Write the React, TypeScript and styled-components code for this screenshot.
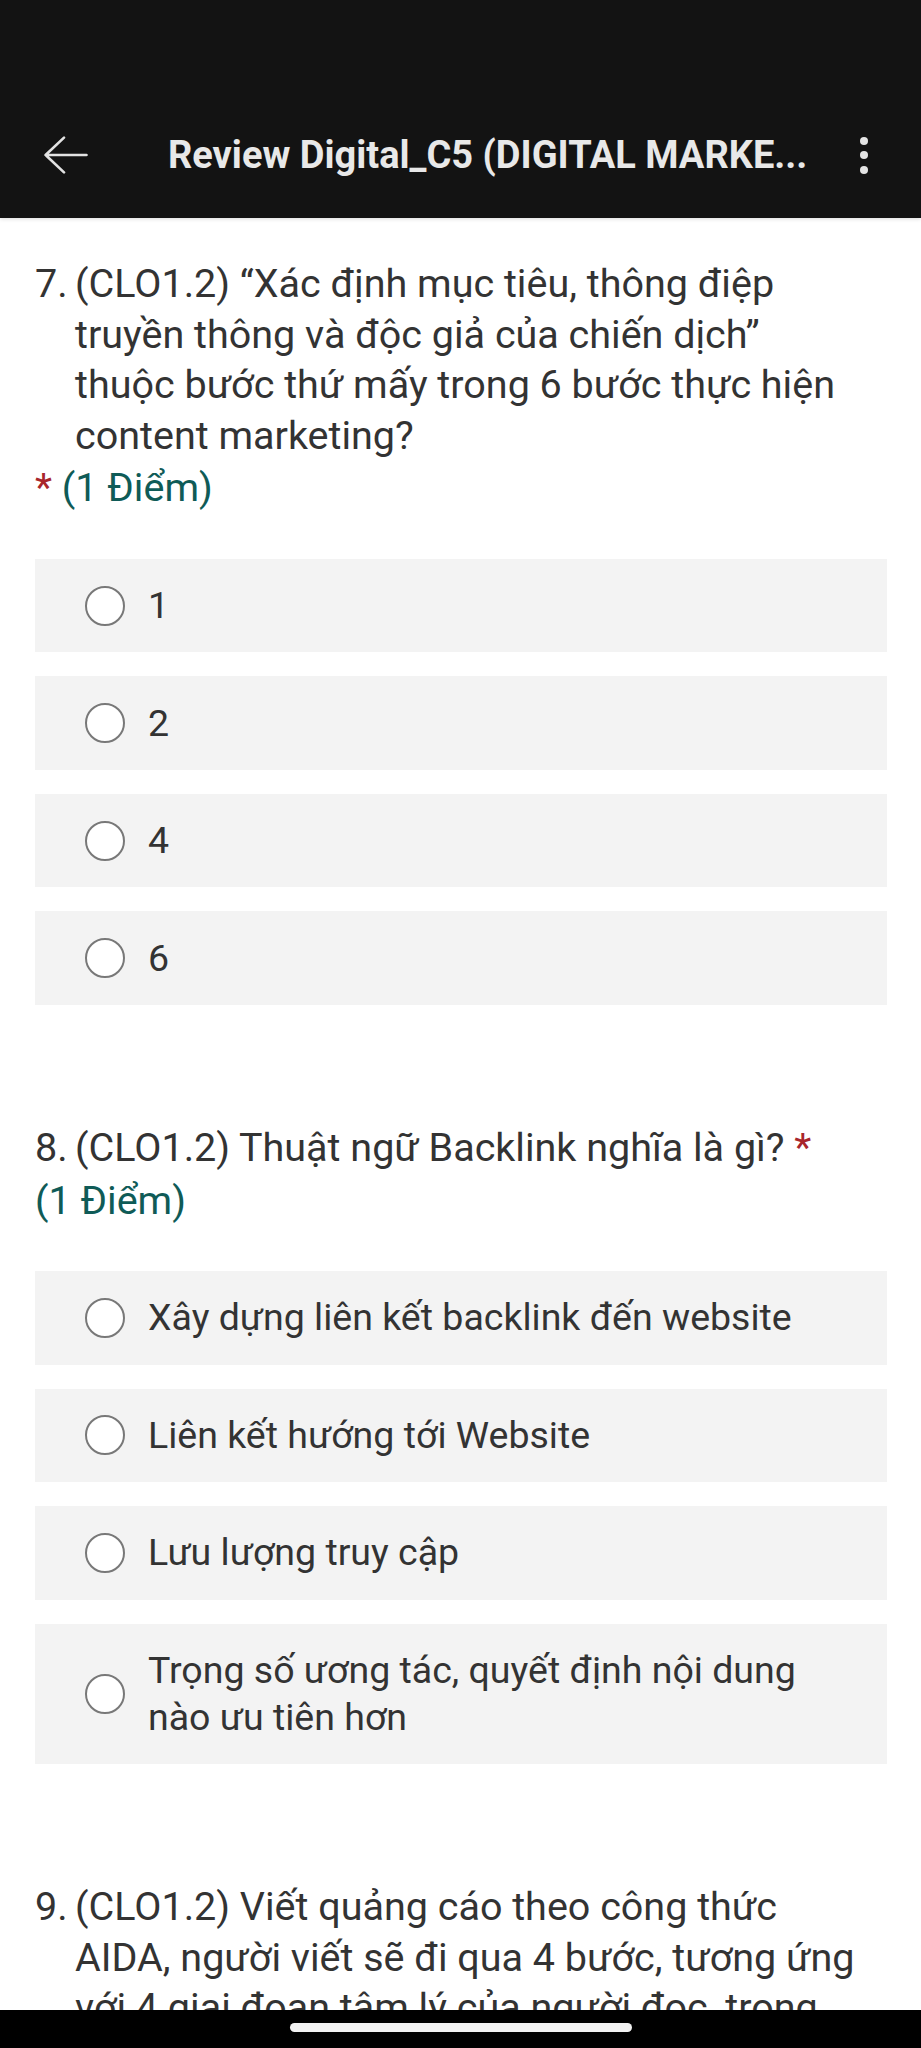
import React from 'react'
import styled, { createGlobalStyle } from 'styled-components'

interface Question {
  number: number
  text: string
  points: number
  options: string[]
}

const questions: Question[] = [
  {
    number: 7,
    text: '(CLO1.2) “Xác định mục tiêu, thông điệp truyền thông và độc giả của chiến dịch” thuộc bước thứ mấy trong 6 bước thực hiện content marketing?',
    points: 1,
    options: ['1', '2', '4', '6'],
  },
  {
    number: 8,
    text: '(CLO1.2) Thuật ngữ Backlink nghĩa là gì?',
    points: 1,
    options: [
      'Xây dựng liên kết backlink đến website',
      'Liên kết hướng tới Website',
      'Lưu lượng truy cập',
      'Trọng số ương tác, quyết định nội dung nào ưu tiên hơn',
    ],
  },
  {
    number: 9,
    text: '(CLO1.2) Viết quảng cáo theo công thức AIDA, người viết sẽ đi qua 4 bước, tương ứng với 4 giai đoạn tâm lý của người đọc, trong đó bước thứ hai là gì?',
    points: 1,
    options: ['Attention', 'Interest', 'Desire', 'Action'],
  },
]

const App: React.FC = () => {
  return (
    <>
      <GlobalStyle />
      <Header>
        <AppBar>
          <BackButton aria-label="Quay lại">
            <svg width="44" height="38" viewBox="0 0 44 38" fill="none">
              <path
                d="M1.6 19 H42.5 M20 1.6 L1.6 19 L20 36.4"
                stroke="#e2e2e2"
                strokeWidth="2.6"
                strokeLinecap="round"
                strokeLinejoin="round"
              />
            </svg>
          </BackButton>
          <Title>Review Digital_C5 (DIGITAL MARKE...</Title>
          <MenuButton aria-label="Thêm">
            <Dot />
            <Dot />
            <Dot />
          </MenuButton>
        </AppBar>
      </Header>

      <Main>
        {questions.map(q => (
          <QuestionBlock key={q.number}>
            <Heading>
              <QNumber>{q.number}.</QNumber>
              <QText>{q.text}</QText>{' '}
              <Required>*</Required>{' '}
              <Points>({q.points} Điểm)</Points>
            </Heading>

            <Options>
              {q.options.map(option => (
                <OptionRow key={option}>
                  <Radio type="radio" name={`q${q.number}`} />
                  <OptionText>{option}</OptionText>
                </OptionRow>
              ))}
            </Options>
          </QuestionBlock>
        ))}
      </Main>

      <NavBar>
        <HomePill />
      </NavBar>
    </>
  )
}

export default App

// ========================================
// STYLED COMPONENTS
// ========================================

const GlobalStyle = createGlobalStyle`
  * {
    box-sizing: border-box;
  }

  html, body {
    margin: 0;
    padding: 0;
    background: #ffffff;
    overflow-x: hidden;
  }

  body {
    font-family: Roboto, 'Noto Sans', 'Liberation Sans', sans-serif;
    -webkit-font-smoothing: antialiased;
  }
`

const Header = styled.header`
  position: relative;
  z-index: 1;
  background: #131313;
  padding-top: 92px;
  box-shadow: 0 1px 4px rgba(0, 0, 0, 0.14);
`

const AppBar = styled.div`
  height: 126px;
  display: flex;
  align-items: center;
`

const BackButton = styled.button`
  flex: none;
  width: 168px;
  height: 100%;
  padding: 0 0 0 44px;
  background: transparent;
  border: none;
  display: flex;
  align-items: center;
  cursor: pointer;
`

const Title = styled.h1`
  flex: 1;
  min-width: 0;
  margin: 0;
  font-size: 38px;
  font-weight: 700;
  color: #e8e8e8;
  white-space: nowrap;
  overflow: hidden;
`

const MenuButton = styled.button`
  flex: none;
  width: 60px;
  margin-right: 27px;
  padding: 0;
  background: transparent;
  border: none;
  display: flex;
  flex-direction: column;
  align-items: center;
  gap: 6.5px;
  cursor: pointer;
`

const Dot = styled.span`
  width: 8px;
  height: 8px;
  border-radius: 50%;
  background: #e4e4e4;
`

const Main = styled.main`
  padding: 41px 34px 0 35px;
`

const QuestionBlock = styled.section`
  margin-bottom: 118px;
`

const Heading = styled.div`
  font-size: 39.5px;
  line-height: 50.6px;
  color: #333333;
`

const QNumber = styled.span`
  display: inline-block;
  width: 40px;
  vertical-align: top;
`

const QText = styled.span`
  display: inline-block;
  max-width: calc(100% - 61px);
  vertical-align: top;
`

const Required = styled.span`
  color: #a8262c;
`

const Points = styled.span`
  display: inline-block;
  margin-top: 2px;
  white-space: nowrap;
  color: #0f5b57;
`

const Options = styled.div`
  margin-top: 45px;
  display: flex;
  flex-direction: column;
  gap: 24px;
`

const OptionRow = styled.label`
  display: flex;
  align-items: center;
  gap: 23px;
  padding: 23.25px 40px 23.25px 50px;
  background: #f3f3f3;
  cursor: pointer;
`

const Radio = styled.input`
  flex: none;
  appearance: none;
  margin: 0;
  width: 40px;
  height: 40px;
  border-radius: 50%;
  border: 2px solid #787878;
  background: #ffffff;
`

const OptionText = styled.span`
  font-size: 37.5px;
  line-height: 47px;
  color: #333333;
`

const NavBar = styled.div`
  position: fixed;
  left: 0;
  right: 0;
  bottom: 0;
  height: 38px;
  background: #000000;
  display: flex;
  justify-content: center;
  padding-top: 13px;
  z-index: 2;
`

const HomePill = styled.div`
  width: 342px;
  height: 8.5px;
  border-radius: 5px;
  background: #f2f2f2;
`
